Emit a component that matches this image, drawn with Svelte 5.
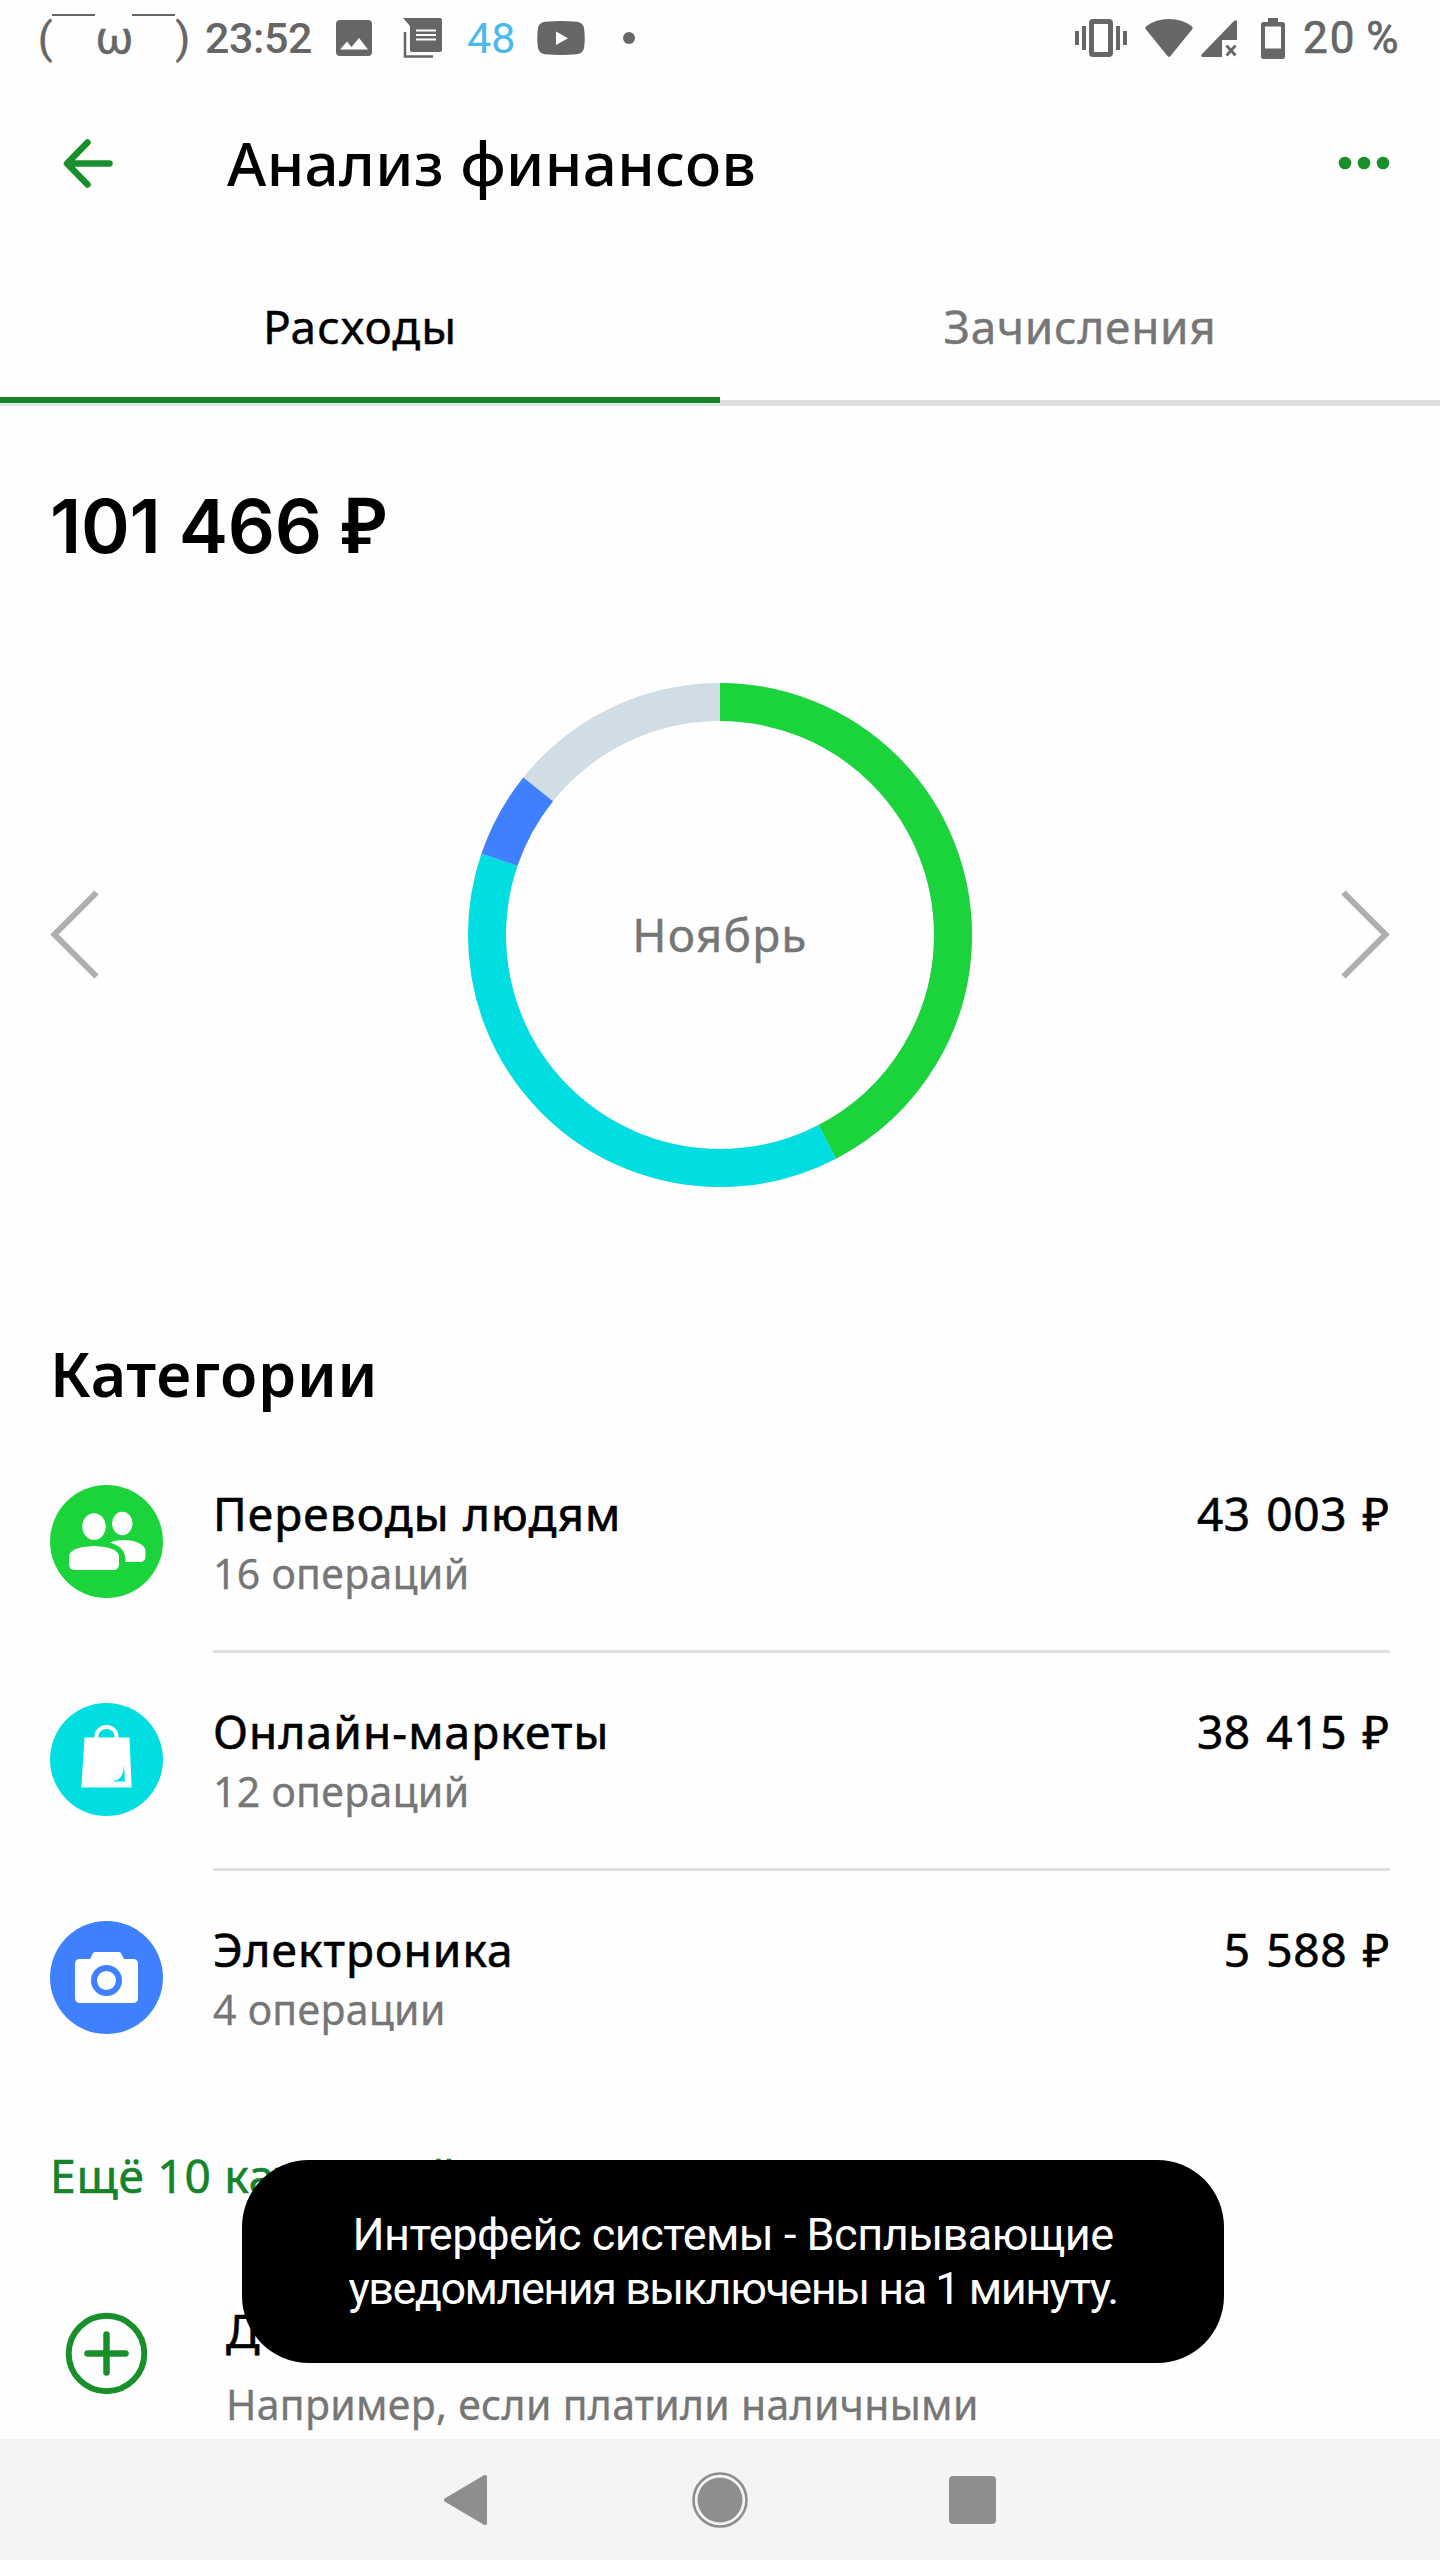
<script lang="ts">
	type Category = {
		name: string;
		operations: string;
		amount: string;
		value: number;
		icon: 'people' | 'bag' | 'camera';
	};

	const total = 101466;
	const categories: Category[] = [
		{ name: 'Переводы людям', operations: '16 операций', amount: '43 003 ₽', value: 43003, icon: 'people' },
		{ name: 'Онлайн-маркеты', operations: '12 операций', amount: '38 415 ₽', value: 38415, icon: 'bag' },
		{ name: 'Электроника', operations: '4 операции', amount: '5 588 ₽', value: 5588, icon: 'camera' }
	];

	// Offset of each donut segment, in percent of the full circle
	const segments = categories.map((category, i) => ({
		icon: category.icon,
		share: (category.value / total) * 100,
		start: (categories.slice(0, i).reduce((sum, c) => sum + c.value, 0) / total) * 100
	}));
</script>

<div class="screen">
	<div class="status-bar">
		<span class="face">
			<span>(</span><i></i><span class="omega">ω</span><i></i><span>)</span>
		</span>
		<span class="clock">23:52</span>
		<svg class="st-image" width="36" height="36" viewBox="0 0 36 36">
			<path fill="currentColor" fill-rule="evenodd" d="M4 0h28a4 4 0 0 1 4 4v28a4 4 0 0 1-4 4H4a4 4 0 0 1-4-4V4a4 4 0 0 1 4-4ZM4 29.500h28L23 18l-7.500 9-4.500-5.500Z" />
		</svg>
		<svg class="st-news" width="39" height="40" viewBox="0 0 39 40">
			<path fill="currentColor" d="M0 0h37a2 2 0 0 1 2 2v30a2 2 0 0 1-2 2H9a2 2 0 0 1-2-2V8Z" />
			<path d="M13 12.500h20M13 17h20M13 21.500h20" stroke="#fefefe" stroke-width="2" />
			<path d="M2 14v24.500h28" fill="none" stroke="currentColor" stroke-width="2.500" />
		</svg>
		<span class="count">48</span>
		<svg class="st-video" width="48" height="34" viewBox="0 0 48 34">
			<path fill="currentColor" fill-rule="evenodd" d="M8 .8Q24-.8 40 .8q6 .7 7 6.200 1.500 10 0 20-1 5.500-7 6.200-16 1.600-32 0Q2 32.500 1 27-.5 17 1 7 2 1.500 8 .8ZM19 10.500v13.500l12-6.700Z" />
		</svg>
		<span class="st-dot"></span>

		<svg class="st-vibrate" width="52" height="38" viewBox="0 0 52 38" fill="currentColor">
			<path fill-rule="evenodd" d="M18 0h16a4 4 0 0 1 4 4v30a4 4 0 0 1-4 4H18a4 4 0 0 1-4-4V4a4 4 0 0 1 4-4Zm1 5v28h14V5Z" />
			<path d="M0 12h4v14H0zM7 7h4v24H7zM41 7h4v24h-4zM48 12h4v14h-4z" />
		</svg>
		<svg class="st-wifi" width="48" height="38" viewBox="0 0 48 38">
			<path fill="currentColor" d="M1 10.500Q-.5 8.500 1.500 7 11 0 24 0t22.500 7q2 1.500.5 3.500L25.500 37q-1.500 1.700-3 0Z" />
		</svg>
		<svg class="st-signal" width="36" height="37" viewBox="0 0 36 37">
			<path fill="currentColor" d="M36 2v18H21v17H2q-3 0-1-3L33 1q3-2 3 1Z" />
			<path d="m25.500 25.500 9 10m0-10-9 10" stroke="currentColor" stroke-width="2.800" />
		</svg>
		<svg class="st-battery" width="24" height="41" viewBox="0 0 24 41">
			<path fill="currentColor" fill-rule="evenodd" d="M7 0h10v4h4.500A2.500 2.500 0 0 1 24 6.500v32a2.500 2.500 0 0 1-2.500 2.500h-19A2.500 2.500 0 0 1 0 38.500v-32A2.500 2.500 0 0 1 2.500 4H7ZM4 8.500v22h16v-22Z" />
		</svg>
		<span class="percent">20 %</span>
	</div>

	<header class="app-bar">
		<svg class="back" width="52" height="52" viewBox="0 0 52 52" fill="none" stroke="#198f2c" stroke-width="6.500" stroke-linecap="round" stroke-linejoin="round">
			<path d="M47.500 26.500H5.500M25.500 5.500 5 26.500l20.500 21" />
		</svg>
		<h1>Анализ финансов</h1>
		<svg class="more" width="52" height="14" viewBox="0 0 52 14" fill="#198f2c">
			<circle cx="7" cy="7" r="6.300" />
			<circle cx="26" cy="7" r="6.300" />
			<circle cx="45" cy="7" r="6.300" />
		</svg>
	</header>

	<nav class="tabs">
		<div class="tab active"><span>Расходы</span></div>
		<div class="tab"><span>Зачисления</span></div>
	</nav>

	<main>
		<div class="total">101 466 <span class="currency">₽</span></div>

		<div class="chart">
			<svg class="chevron" width="50" height="90" viewBox="0 0 50 90">
				<path d="M46.500 2.500 4.500 44.500l42 42" />
			</svg>
			<div class="donut">
				<svg width="504" height="504" viewBox="0 0 504 504">
					<circle class="rest" cx="252" cy="252" r="233" />
					{#each segments as segment}
						<circle
							class={segment.icon}
							cx="252"
							cy="252"
							r="233"
							pathLength="100"
							stroke-dasharray="{segment.share} 100"
							stroke-dashoffset={-segment.start}
							transform="rotate(-90 252 252)"
						/>
					{/each}
				</svg>
				<span class="month">Ноябрь</span>
			</div>
			<svg class="chevron" width="50" height="90" viewBox="0 0 50 90">
				<path d="m3.500 2.500 42 42-42 42" />
			</svg>
		</div>

		<h2>Категории</h2>

		<ul class="categories">
			{#each categories as category}
				<li>
					<svg class="badge {category.icon}" width="114" height="114" viewBox="0 0 114 114">
						<circle cx="56.500" cy="56.500" r="56.500" />
						{#if category.icon === 'people'}
							<g fill="#fff">
								<ellipse cx="44" cy="41.500" rx="11.700" ry="13.300" />
								<ellipse cx="72.300" cy="38.500" rx="10.300" ry="11.700" />
								<path d="M19 72q0-10 25-11 25 1 25 11v7q0 6-6 6H25q-6 0-6-6Z" />
								<path d="M59.500 57.500q6-2.500 13-2.500 12 0 18 4 5 3 5 7v5q0 6-6 6H75.500q1-15-16-19.500Z" />
							</g>
						{:else if category.icon === 'bag'}
							<path fill="#fff" fill-rule="evenodd" d="M34.500 34.500h45l2.200 50H31.300Zm39.500 28q-1 15-10 15v1h11Z" />
							<path d="M46.500 36v-3a10 9 0 0 1 20 0v3" fill="none" stroke="#fff" stroke-width="4" />
						{:else}
							<path fill="#fff" fill-rule="evenodd" d="M45 31h24q2 0 3 3l2 4h9q5 0 5 5v34q0 5-5 5H30q-5 0-5-5V43q0-5 5-5h10l2-4q1-3 3-3Zm11.500 13a15.500 15.500 0 1 0 0 31 15.500 15.500 0 0 0 0-31Z" />
							<circle cx="56.500" cy="59.500" r="9.500" fill="#fff" />
						{/if}
					</svg>
					<div class="info">
						<div class="text">
							<span class="name">{category.name}</span>
							<span class="operations">{category.operations}</span>
						</div>
						<span class="amount">{category.amount}</span>
					</div>
				</li>
			{/each}
		</ul>

		<div class="show-more">Ещё 10 категорий</div>

		<div class="add-row">
			<svg width="84" height="84" viewBox="0 0 84 84" fill="none" stroke="#198f2c" stroke-linecap="round">
				<circle cx="41.500" cy="41.500" r="37.800" stroke-width="6" />
				<path d="M41.500 22.500v38M22.500 41.500h38" stroke-width="6.500" />
			</svg>
			<div class="text">
				<span class="name">Добавить операцию</span>
				<span class="hint">Например, если платили наличными</span>
			</div>
		</div>
	</main>

	<footer class="nav-bar">
		<svg width="46" height="52" viewBox="0 0 46 52">
			<path d="M42 3v46L3 26Z" fill="currentColor" stroke="currentColor" stroke-width="4" stroke-linejoin="round" />
		</svg>
		<svg class="home" width="56" height="56" viewBox="0 0 56 56">
			<circle cx="28" cy="28" r="22.500" fill="currentColor" />
			<circle cx="28" cy="28" r="26.500" fill="none" stroke="currentColor" stroke-width="2.600" />
		</svg>
		<svg width="47" height="48" viewBox="0 0 47 48">
			<rect width="47" height="48" rx="4" fill="currentColor" />
		</svg>
	</footer>

	<div class="toast">
		<span class="line-1">Интерфейс системы - Всплывающие</span>
		<span class="line-2">уведомления выключены на 1 минуту.</span>
	</div>
</div>

<style>
	:global(body) {
		background: #fefefe;
	}

	.screen {
		position: relative;
		display: flex;
		flex-direction: column;
		width: 1440px;
		height: 2560px;
		overflow: hidden;
		background: #fefefe;
		color: #000;
		font-family: 'Noto Sans', 'Open Sans', sans-serif;
		white-space: nowrap;
	}

	svg {
		display: block;
		flex: none;
	}

	h1,
	h2,
	ul {
		margin: 0;
		padding: 0;
		list-style: none;
	}

	/* Status bar */
	.status-bar {
		display: flex;
		align-items: center;
		height: 76px;
		flex: none;
		padding: 0 40px 0 38px;
		color: #666;
		font-family: Roboto, sans-serif;
		font-size: 43px;
	}

	.face {
		display: flex;
		align-items: center;
		width: 167px;
		font-size: 42px;
		-webkit-text-stroke: 0.5px;
	}

	.face i {
		width: 43px;
		height: 2px;
		margin-bottom: 46px;
		background: currentColor;
	}

	.face .omega {
		width: 37px;
		font-size: 46px;
		text-align: center;
	}

	.clock {
		width: 131px;
		font-weight: 500;
		letter-spacing: -0.4px;
	}

	.st-news {
		margin-left: 31px;
	}

	.count {
		width: 70px;
		margin-left: 25px;
		color: #4bb9e9;
	}

	.st-dot {
		width: 12px;
		height: 12px;
		margin-left: 38px;
		border-radius: 50%;
		background: currentColor;
	}

	.st-vibrate {
		margin-left: auto;
	}

	.st-wifi {
		margin-left: 18px;
	}

	.st-signal {
		margin-left: 8px;
	}

	.st-battery {
		margin-left: 24px;
	}

	.percent {
		width: 97px;
		margin-left: 18px;
		font-size: 44px;
		letter-spacing: 2px;
		word-spacing: -3px;
		-webkit-text-stroke: 0.7px;
	}

	/* App bar */
	.app-bar {
		display: flex;
		align-items: center;
		flex: none;
		height: 174px;
		padding: 0 50px 0 62px;
	}

	.app-bar h1 {
		margin: -1px 0 0 113px;
		font-size: 60px;
		font-weight: 500;
		letter-spacing: 0.4px;
		line-height: 80px;
	}

	.more {
		margin-left: auto;
	}

	/* Tabs */
	.tabs {
		display: flex;
		flex: none;
		height: 156px;
	}

	.tab {
		box-sizing: border-box;
		flex: 1;
		padding-top: 44px;
		border-bottom: 6px solid #dfdfdf;
		color: #767676;
		font-size: 46px;
		letter-spacing: 0.7px;
		line-height: 64px;
		text-align: center;
		-webkit-text-stroke: 0.4px;
	}

	.tab.active {
		height: 153px;
		border-color: #14832a;
		box-shadow: 0 3px #dfeadf;
		color: #000;
		letter-spacing: 1px;
	}

	/* Content */
	main {
		display: flex;
		flex-direction: column;
		flex: none;
		height: 2033px;
		padding: 0 50px;
	}

	.total {
		margin-top: 70px;
		font-family: Inter, sans-serif;
		font-size: 74px;
		font-weight: 600;
		letter-spacing: -0.3px;
		line-height: 100px;
	}

	.currency {
		margin-left: 1px;
		font-family: 'Noto Sans', sans-serif;
		font-size: 77px;
		line-height: 1;
	}

	.chart {
		display: flex;
		align-items: center;
		justify-content: space-between;
		margin-top: 107px;
	}

	.chevron {
		fill: none;
		stroke: #aeaeae;
		stroke-width: 6;
	}

	.donut {
		display: grid;
		place-items: center;
	}

	.donut > * {
		grid-area: 1 / 1;
	}

	.donut circle {
		fill: none;
		stroke-width: 38;
	}

	.donut .rest {
		stroke: #d0dde4;
	}

	.donut .people {
		stroke: #1bd33b;
	}

	.donut .bag {
		stroke: #00dee1;
	}

	.donut .camera {
		stroke: #3f80ff;
	}

	.month {
		margin-top: -3px;
		color: #767676;
		font-size: 46px;
		letter-spacing: 1.2px;
		-webkit-text-stroke: 0.4px;
	}

	h2 {
		margin-top: 147px;
		font-size: 61px;
		font-weight: 600;
		letter-spacing: 0.7px;
		line-height: 80px;
	}

	.categories {
		margin-top: 38px;
	}

	.categories li {
		display: flex;
		align-items: flex-start;
		height: 218px;
	}

	.badge {
		margin-top: 33px;
	}

	.badge.people {
		fill: #1bd33b;
	}

	.badge.bag {
		fill: #00dee1;
	}

	.badge.camera {
		fill: #3f80ff;
	}

	.info {
		box-sizing: border-box;
		display: flex;
		justify-content: space-between;
		flex: 1;
		height: 201px;
		margin-left: 49px;
		padding-top: 29px;
		border-bottom: 3px solid #e0e0e0;
	}

	li:last-child .info {
		border-bottom: 0;
	}

	.text {
		display: flex;
		flex-direction: column;
	}

	.name,
	.amount {
		font-size: 46px;
		letter-spacing: 1.1px;
		line-height: 64px;
		-webkit-text-stroke: 0.6px;
	}

	.amount {
		letter-spacing: 0.6px;
		word-spacing: 3px;
	}

	.operations,
	.hint {
		color: #767676;
		font-size: 41px;
		letter-spacing: 0.3px;
		line-height: 56px;
		-webkit-text-stroke: 0.3px;
	}

	.show-more {
		margin-top: 37px;
		color: #14832a;
		font-size: 46px;
		letter-spacing: 0.8px;
		line-height: 64px;
		-webkit-text-stroke: 0.6px;
	}

	.add-row {
		display: flex;
		padding-left: 15px;
		margin-top: 105px;
	}

	.add-row .text {
		margin: -14px 0 0 77px;
		gap: 14px;
	}

	/* System navigation */
	.nav-bar {
		display: flex;
		align-items: center;
		flex: 1;
		padding-left: 443px;
		background: #f4f4f4;
		color: #8e8e8e;
	}

	.home {
		margin: 0 201px 0 203px;
	}

	.toast {
		position: absolute;
		left: 242px;
		top: 2160px;
		display: flex;
		flex-direction: column;
		align-items: center;
		justify-content: center;
		width: 982px;
		height: 203px;
		border-radius: 67px;
		background: #000;
		color: #fff;
		font-family: Roboto, sans-serif;
		font-size: 45px;
		line-height: 54px;
	}

	.line-1 {
		letter-spacing: -0.5px;
	}

	.line-2 {
		letter-spacing: -1.5px;
	}
</style>
